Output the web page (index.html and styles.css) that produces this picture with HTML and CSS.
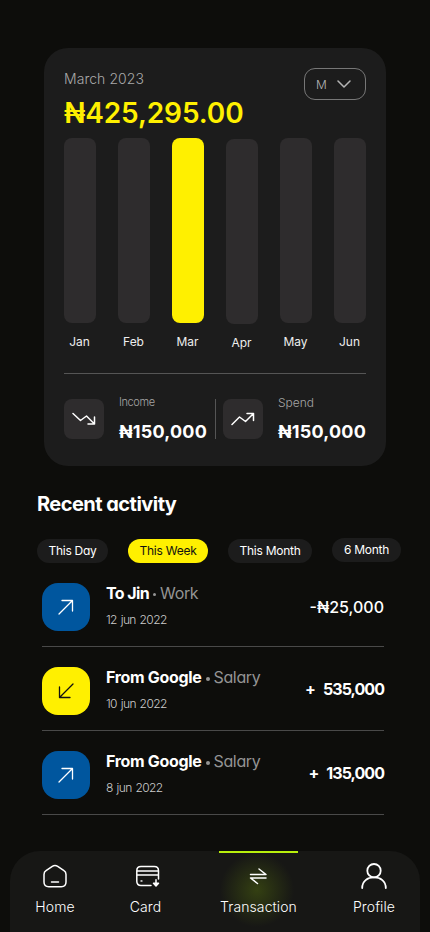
FILE: index.html
```html
<!DOCTYPE html>
<html lang="en">
<head>
<meta charset="utf-8">
<meta name="viewport" content="width=device-width, initial-scale=1">
<title>Transactions</title>
<link rel="stylesheet" href="styles.css">
</head>
<body>
<main class="screen">
  <section class="card">
    <header class="card-head">
      <div>
        <p class="period">March 2023</p>
        <p class="total">₦425,295.00</p>
      </div>
      <button class="select"><span>M</span><svg width="14" height="8" viewBox="0 0 14 8"><path d="M1 1l6 6 6-6"/></svg></button>
    </header>
    <div class="chart">
      <div class="month"><i class="bar"></i><span>Jan</span></div>
      <div class="month"><i class="bar"></i><span>Feb</span></div>
      <div class="month active"><i class="bar"></i><span>Mar</span></div>
      <div class="month lower"><i class="bar"></i><span>Apr</span></div>
      <div class="month"><i class="bar"></i><span>May</span></div>
      <div class="month"><i class="bar"></i><span>Jun</span></div>
    </div>
    <div class="summary">
      <div class="stat income">
        <span class="stat-icon"><svg width="24" height="14" viewBox="0 0 24 14"><path d="M1 1.500l7.500 7 6-4.500 8 8M22.500 5v7H16"/></svg></span>
        <div><p class="stat-label">Income</p><p class="stat-value">₦150,000</p></div>
      </div>
      <div class="stat spend">
        <span class="stat-icon"><svg width="24" height="14" viewBox="0 0 24 14"><path d="M1 12.500l7.500-7.500 6 4.500 8-8M16 1.500h6.500v7"/></svg></span>
        <div><p class="stat-label">Spend</p><p class="stat-value">₦150,000</p></div>
      </div>
    </div>
  </section>

  <section class="activity">
    <h2>Recent activity</h2>
    <div class="filters">
      <button class="pill day">This Day</button>
      <button class="pill week">This Week</button>
      <button class="pill mon">This Month</button>
      <button class="pill six">6 Month</button>
    </div>
    <ul class="list">
      <li>
        <span class="tile out"><svg width="16" height="16" viewBox="0 0 16 16"><path d="M1 15L14.500 1.500M4 1.500h10.500V12"/></svg></span>
        <div class="info"><p class="who"><b class="short">To Jin</b><i class="dot small"></i><span>Work</span></p><p class="date">12 jun 2022</p></div>
        <span class="amount debit">-₦25,000</span>
      </li>
      <li>
        <span class="tile in"><svg width="16" height="16" viewBox="0 0 16 16"><path d="M15 1L1.500 14.500M1.500 4v10.500H12"/></svg></span>
        <div class="info"><p class="who"><b>From Google</b><i class="dot"></i><span>Salary</span></p><p class="date">10 jun 2022</p></div>
        <span class="amount"><span class="plus">+</span>535,000</span>
      </li>
      <li>
        <span class="tile out"><svg width="16" height="16" viewBox="0 0 16 16"><path d="M1 15L14.500 1.500M4 1.500h10.500V12"/></svg></span>
        <div class="info"><p class="who"><b>From Google</b><i class="dot"></i><span>Salary</span></p><p class="date">8 jun 2022</p></div>
        <span class="amount"><span class="plus">+</span>135,000</span>
      </li>
    </ul>
  </section>

  <nav class="tabs">
    <a class="tab home"><svg width="28" height="28" viewBox="0 0 28 28"><path d="M11.300 4.300L5 8.700Q3 10 3 12.500V20q0 4.700 4.700 4.700h12.600q4.700 0 4.700-4.700v-7.500q0-2.500-2-3.800l-6.300-4.400q-2.700-1.700-5.400 0zM10.500 20h7"/></svg><span>Home</span></a>
    <a class="tab bank"><svg width="28" height="28" viewBox="0 0 28 28"><path d="M19 23.500H9q-4.200 0-4.200-4.200V8.700q0-4.200 4.200-4.200h13.300q4.200 0 4.200 4.200V17M5 9h21.500M5 13h21.500M24 17.800V23"/><path class="solid" d="M21.500 21.300h5L24 24z"/><circle cx="9.500" cy="19" r=".3"/></svg><span>Card</span></a>
    <a class="tab current"><svg width="28" height="28" viewBox="0 0 28 28"><path d="M5.500 12.500h15.500l-7-5.500M21 16H5.500l7 5.500"/></svg><span>Transaction</span></a>
    <a class="tab me"><svg width="28" height="28" viewBox="0 0 28 28"><circle cx="14" cy="8.700" r="6.700"/><path d="M2.200 26C2.200 19 7.500 15.400 14 15.400S25.800 19 25.800 26"/></svg><span>Profile</span></a>
  </nav>
</main>
</body>
</html>
```

FILE: styles.css
```css
* { box-sizing: border-box; margin: 0; padding: 0; }
body { background: #0d0d0b; color: #fff; font-family: Inter, "Liberation Sans", sans-serif; }
button { border: 0; background: none; color: inherit; font: inherit; }
svg { display: block; fill: none; stroke: currentColor; stroke-width: 1.5; stroke-linecap: round; stroke-linejoin: round; flex: none; }
p, span, b { white-space: nowrap; }
.screen { width: 430px; height: 932px; padding-top: 48px; display: flex; flex-direction: column; overflow: hidden; }

.card { width: 342px; height: 418px; margin-left: 44px; padding: 20px; border-radius: 24px; background: #1c1c1c; flex: none; }
.card-head { height: 70px; display: flex; justify-content: space-between; }
.period { margin-top: 2px; font-size: 14px; line-height: 18px; font-weight: 300; letter-spacing: .05px; color: #a9a9a9; }
.total { margin-top: 7px; font-size: 28px; line-height: 36px; font-weight: 600; letter-spacing: -.1px; color: #fff000; }
.select { width: 62px; height: 32px; padding: 0 14px 0 11px; border: 1px solid #777; border-radius: 11px; display: flex; align-items: center; justify-content: space-between; font-size: 12px; font-weight: 300; color: #b5b5b5; }

.chart { height: 216px; display: flex; justify-content: space-between; }
.month { width: 32px; display: flex; flex-direction: column; align-items: center; font-size: 12px; line-height: 16px; color: #eee; }
.month span { margin-left: -1px; }
.bar { width: 32.500px; height: 185.400px; margin-bottom: 10.600px; border-radius: 8px; background: #2e2c2d; }
.active .bar { background: #fff000; }
.lower { padding-top: 1px; }

.summary { margin-top: 19px; padding-top: 25px; border-top: 1px solid #555; display: flex; }
.stat { display: flex; height: 40px; }
.income { width: 152px; border-right: 1px solid #555; }
.spend { margin-left: 7px; }
.stat-icon { width: 40px; height: 40px; margin-right: 15px; border-radius: 8px; background: #2e2c2d; display: flex; align-items: center; justify-content: center; flex: none; }
.stat-label { margin-top: -5px; height: 16px; line-height: 16px; font-size: 11px; font-weight: 300; letter-spacing: -.4px; color: #a5a5a5; }
.spend .stat-label { font-size: 12px; line-height: 18px; letter-spacing: 0; }
.stat-value { margin-top: 10px; line-height: 24px; font-size: 18px; font-weight: 700; letter-spacing: .2px; }

.activity { font-feature-settings: "cv11"; height: 385px; }
.activity h2 { margin: 24px 0 0 37px; font-size: 20px; line-height: 28px; font-weight: 700; letter-spacing: -.53px; }
.filters { margin: 21px 0 0 37px; display: flex; gap: 20px; height: 24px; }
.pill { height: 24px; border-radius: 12px; background: #1c1c1c; font-size: 12px; line-height: 22px; letter-spacing: -.25px; text-align: center; white-space: nowrap; }
.day { width: 71px; }
.week { width: 80px; background: #fff000; color: #111; }
.mon { width: 84px; }
.six { width: 69px; margin-top: -1px; }
.list { list-style: none; width: 342px; margin: 0 0 0 42px; }
.list li { height: 84px; padding: 20px 0 15px; display: flex; border-bottom: 1px solid #494949; }
.tile { width: 48px; height: 48px; margin-right: 16px; border-radius: 16px; display: flex; align-items: center; justify-content: center; }
.tile svg { stroke-width: 1.3; }
.out { background: #00569e; }
.in { background: #fff000; color: #111; }
.who { display: flex; align-items: center; height: 20px; font-size: 16px; letter-spacing: -.35px; color: #949494; }
.who b { color: #fff; font-weight: 700; letter-spacing: -.32px; }
.who .short { letter-spacing: -.6px; }
.dot { width: 4px; height: 4px; margin: 3px 4px 0; border-radius: 50%; background: #949494; }
.small { width: 3px; height: 3px; }
.date { margin-top: 8px; font-size: 12px; line-height: 18px; font-weight: 300; letter-spacing: -.6px; word-spacing: 1px; color: #ccc; }
.amount { margin-left: auto; height: 48px; line-height: 45px; font-size: 16px; font-weight: 700; letter-spacing: -.95px; }
.debit { font-weight: 500; line-height: 49px; letter-spacing: 0; }
.plus { margin-right: 8px; }

.tabs { position: relative; width: 410px; height: 81px; margin-left: 10px; border-radius: 30px 30px 0 0; background: #171715; display: flex; }
.tab { display: flex; flex-direction: column; align-items: center; padding-top: 11px; height: 81px; font-size: 14px; line-height: 20px; font-weight: 350; letter-spacing: .1px; }
.tab span { margin-top: 7px; }
.solid { fill: currentColor; }
.home { width: 90px; }
.bank { width: 91px; }
.current { width: 79px; margin-left: 28px; padding-top: 9px; border-top: 2px solid #b8ef0c; background: radial-gradient(circle 37px at 38px 37px, #344012, #171715); }
.me { width: 80px; margin-left: 36px; }
.me svg { stroke-width: 1.8; }
```
